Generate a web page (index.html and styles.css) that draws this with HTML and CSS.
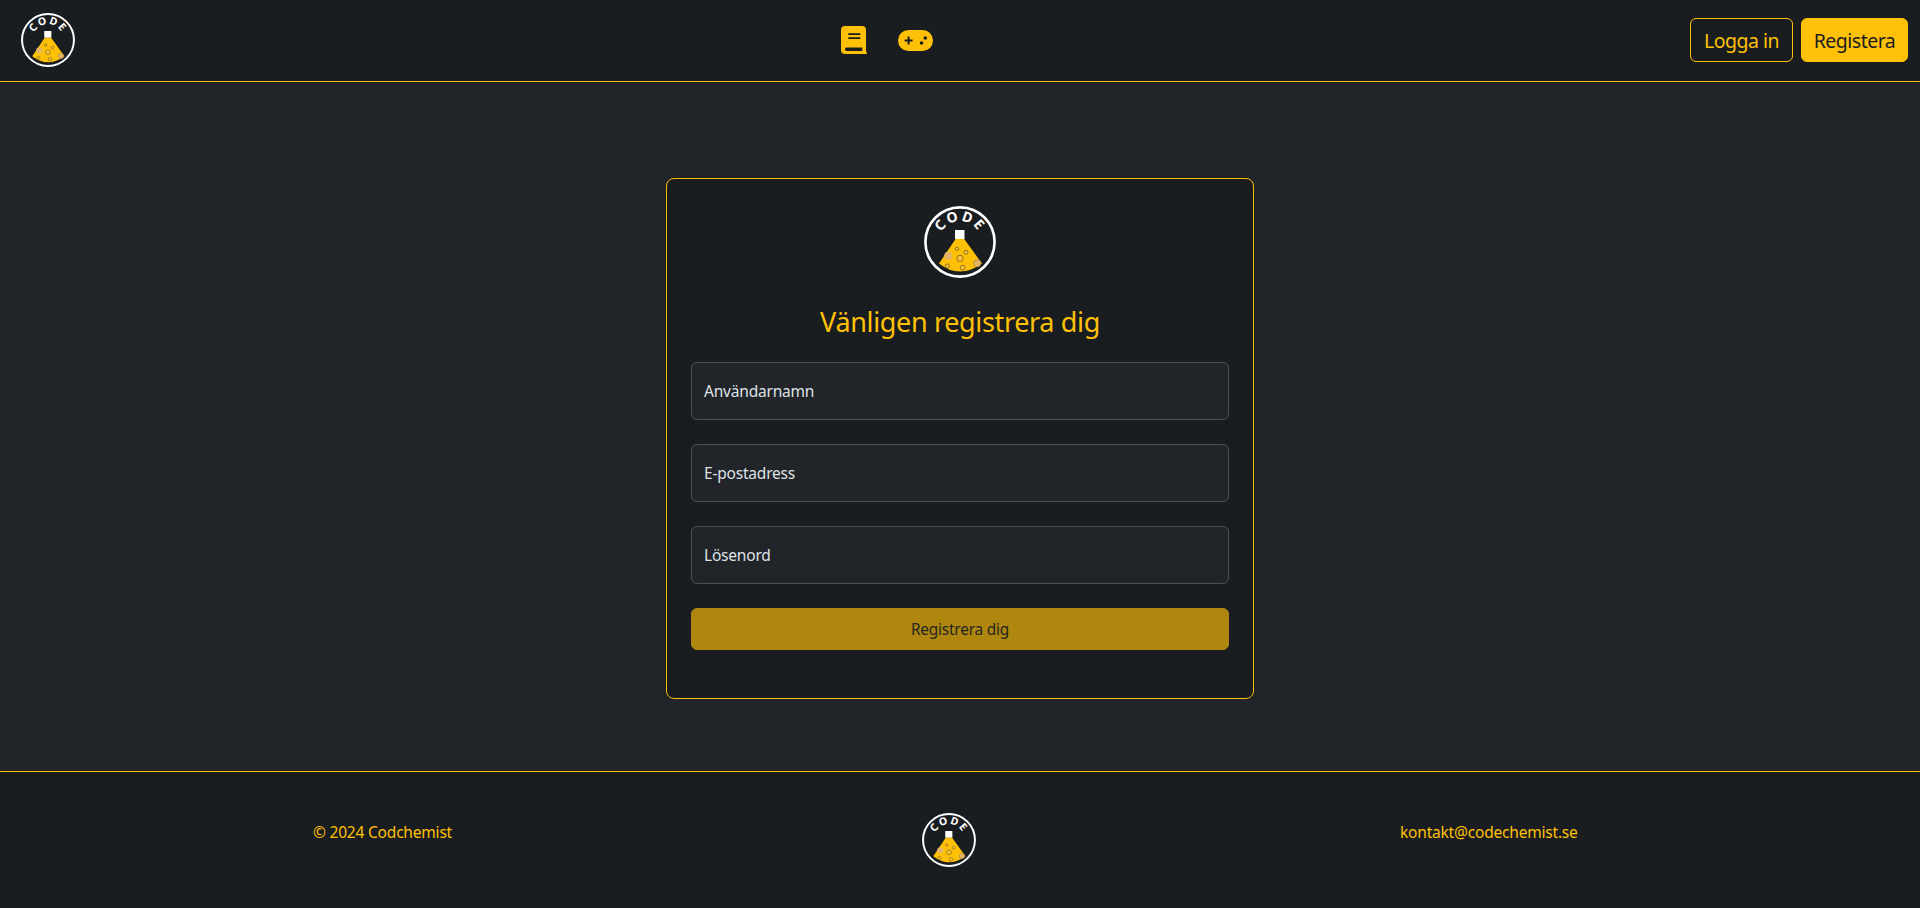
FILE: index.html
```html
<!DOCTYPE html>
<html lang="sv">
<head>
<meta charset="utf-8">
<title>Registrera dig</title>
<link rel="stylesheet" href="styles.css">
</head>
<body>
<svg class="defs" width="0" height="0" aria-hidden="true">
  <defs>
    <symbol id="logo" viewBox="0 0 72 72">
      <circle cx="36" cy="36" r="34.6" fill="#1a1d20" stroke="#fff" stroke-width="2.6"/>
      <path id="arc" d="M15 36 A21 21 0 0 1 57 36" fill="none"/>
      <text class="logo-text"><textPath href="#arc" startOffset="50%" text-anchor="middle">CODE</textPath></text>
      <rect x="31" y="24" width="9.5" height="9" fill="#fff"/>
      <path d="M31.6 33H40.2L58 57.5Q47 65.5 36 65.5Q25 65.5 15 57.5Z" fill="#ffc107"/>
      <circle cx="24.3" cy="49.7" r="4" fill="#e2b566"/>
      <circle cx="53.3" cy="57.3" r="3.7" fill="#e2b566" stroke="#7a6020" stroke-width=".4"/>
      <g fill="#f7c038" stroke="#6b5414" stroke-width=".7">
        <circle cx="36" cy="52.3" r="3.2"/>
        <circle cx="33" cy="42.7" r="1.7"/>
        <circle cx="42" cy="46.3" r="2"/>
        <circle cx="23.3" cy="60" r="2.1"/>
        <circle cx="38.7" cy="61.7" r="2.4"/>
      </g>
    </symbol>
  </defs>
</svg>

<header class="topbar">
  <a class="brand" href="#"><svg class="logo logo-sm"><use href="#logo"/></svg></a>
  <nav class="icons">
    <a href="#" aria-label="Bok">
      <svg class="icon-book" viewBox="0 0 26 28">
        <path d="M4 0H21Q25 0 25 4V24.5L26 28H4Q0 28 0 24V4Q0 0 4 0Z" fill="#ffc107"/>
        <path d="M7.3 7.2H19.3V9H7.3ZM7.3 11.2H19.3V13H7.3ZM5.5 21.5H21.3V25H5.5Q4 25 4 23.2Q4 21.5 5.5 21.5Z" fill="#1a1d20"/>
      </svg>
    </a>
    <a href="#" aria-label="Spel">
      <svg class="icon-game" viewBox="0 0 35 21">
        <rect width="35" height="21" rx="10.5" fill="#ffc107"/>
        <path d="M9.6 6.6H11.6V9.6H14.6V11.6H11.6V14.6H9.6V11.6H6.6V9.6H9.6Z" fill="#1a1d20"/>
        <circle cx="27.3" cy="8" r="1.8" fill="#1a1d20"/>
        <circle cx="23.6" cy="13" r="1.8" fill="#1a1d20"/>
      </svg>
    </a>
  </nav>
  <div class="actions">
    <a class="btn btn-outline" href="#">Logga in</a>
    <a class="btn btn-solid" href="#">Registera</a>
  </div>
</header>

<main class="content">
  <form class="card">
    <svg class="logo logo-lg"><use href="#logo"/></svg>
    <h1 class="title">Vänligen registrera dig</h1>
    <input class="field" type="text" placeholder="Användarnamn">
    <input class="field" type="email" placeholder="E-postadress">
    <input class="field" type="password" placeholder="Lösenord">
    <button class="submit" type="button" disabled>Registrera dig</button>
  </form>
</main>

<footer class="footer">
  <span class="foot-text">© 2024 Codchemist</span>
  <svg class="logo logo-sm"><use href="#logo"/></svg>
  <a class="foot-text" href="#">kontakt@codechemist.se</a>
</footer>
</body>
</html>
```

FILE: styles.css
```css
* {
  box-sizing: border-box;
}

html,
body {
  height: 100%;
}

body {
  margin: 0;
  display: flex;
  flex-direction: column;
  background: #212529;
  color: #ffc107;
  font-family: "Noto Sans", "Liberation Sans", sans-serif;
  font-size: 16px;
  overflow: hidden;
}

a {
  color: inherit;
  text-decoration: none;
}

.defs {
  position: absolute;
}

.logo {
  display: block;
  flex: none;
}

.logo-sm {
  width: 54px;
  height: 54px;
}

.logo-lg {
  width: 72px;
  height: 72px;
  margin: 0 auto;
}

.logo-text {
  fill: #fff;
  font-family: "Noto Sans", sans-serif;
  font-size: 14px;
  font-weight: 700;
  letter-spacing: 2px;
}

.topbar {
  flex: none;
  height: 82px;
  display: flex;
  align-items: center;
  justify-content: space-between;
  padding: 0 12px 1px 21px;
  background: #1a1d20;
  border-bottom: 1px solid #ffc107;
}

.brand {
  margin-right: 9px;
}

.icons {
  display: flex;
  align-items: center;
  gap: 31px;
}

.icons a {
  display: block;
}

.icons svg {
  display: block;
}

.icon-book {
  width: 26px;
  height: 28px;
}

.icon-game {
  width: 35px;
  height: 21px;
}

.actions {
  display: flex;
  gap: 8px;
}

.btn {
  display: flex;
  align-items: center;
  justify-content: center;
  height: 44px;
  padding-top: 1px;
  border: 1px solid #ffc107;
  border-radius: 6px;
  font-size: 19.5px;
  letter-spacing: -0.5px;
}

.btn-outline {
  width: 103px;
}

.btn-solid {
  width: 107px;
  background: #ffc107;
  color: #1a1d20;
}

.content {
  flex: 1;
  display: flex;
  justify-content: center;
  align-items: flex-start;
  padding-top: 96px;
}

.card {
  width: 588px;
  height: 521px;
  display: flex;
  flex-direction: column;
  padding: 27px 24px 48px;
  background: #1a1d20;
  border: 1px solid #ffc107;
  border-radius: 8px;
}

.title {
  margin: 27px 0 23px;
  color: #ffc107;
  font-size: 27px;
  font-weight: 400;
  line-height: 34px;
  letter-spacing: -0.35px;
  text-align: center;
}

.field {
  height: 58px;
  margin-bottom: 24px;
  padding: 0 12px;
  background: #212529;
  border: 1px solid #495057;
  border-radius: 6px;
  color: #dee2e6;
  font: inherit;
  font-size: 15.5px;
  letter-spacing: -0.2px;
}

.field::placeholder {
  color: #dee2e6;
  opacity: 1;
}

.submit {
  height: 42px;
  padding: 0;
  background: #ffc107;
  border: 1px solid #ffc107;
  border-radius: 6px;
  color: #2a2a20;
  font: inherit;
  font-size: 15.4px;
  letter-spacing: -0.2px;
  opacity: 0.65;
}

.footer {
  flex: none;
  height: 137px;
  display: grid;
  grid-template-columns: 609px 478px auto;
  align-items: start;
  padding: 41px 0 0 313px;
  background: #1a1d20;
  border-top: 1px solid #ffc107;
}

.foot-text {
  font-size: 15.5px;
  line-height: 20px;
  margin-top: 9px;
  letter-spacing: -0.2px;
}
```
